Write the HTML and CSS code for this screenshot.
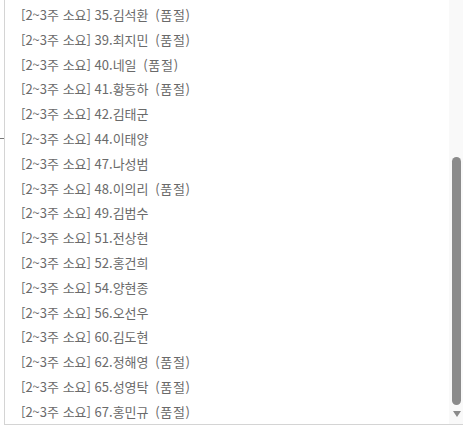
FILE: index.html
```html
<!DOCTYPE html>
<html lang="ko">
<head>
<meta charset="utf-8">
<link rel="stylesheet" href="styles.css">
</head>
<body>
<span class="behind-tick"></span>
<div class="listbox">
  <ul class="options">
    <li>[2~3주 소요] 35.김석환 <span class="soldout">(품절)</span></li>
    <li>[2~3주 소요] 39.최지민 <span class="soldout">(품절)</span></li>
    <li>[2~3주 소요] 40.네일 <span class="soldout">(품절)</span></li>
    <li>[2~3주 소요] 41.황동하 <span class="soldout">(품절)</span></li>
    <li>[2~3주 소요] 42.김태군</li>
    <li>[2~3주 소요] 44.이태양</li>
    <li>[2~3주 소요] 47.나성범</li>
    <li>[2~3주 소요] 48.이의리 <span class="soldout">(품절)</span></li>
    <li>[2~3주 소요] 49.김범수</li>
    <li>[2~3주 소요] 51.전상현</li>
    <li>[2~3주 소요] 52.홍건희</li>
    <li>[2~3주 소요] 54.양현종</li>
    <li>[2~3주 소요] 56.오선우</li>
    <li>[2~3주 소요] 60.김도현</li>
    <li>[2~3주 소요] 62.정해영 <span class="soldout">(품절)</span></li>
    <li>[2~3주 소요] 65.성영탁 <span class="soldout">(품절)</span></li>
    <li>[2~3주 소요] 67.홍민규 <span class="soldout">(품절)</span></li>
  </ul>
  <div class="scrollbar">
    <div class="track"><div class="thumb"></div></div>
    <div class="arrow-down"></div>
  </div>
</div>
</body>
</html>
```
FILE: styles.css
```css
html, body {
  margin: 0;
  padding: 0;
  background: #ffffff;
}
body {
  position: relative;
  width: 463px;
  height: 427px;
  overflow: hidden;
  font-family: "Noto Sans CJK KR", "Noto Sans", sans-serif;
}
.behind-tick {
  position: absolute;
  left: 0;
  top: 138px;
  width: 4px;
  height: 1px;
  background: #777;
}
.listbox {
  margin-left: 4px;
  width: 459px;
  height: 424px;
  border-left: 1px solid #d4d4d4;
  border-bottom: 1px solid #d4d4d4;
  display: flex;
  overflow: hidden;
  box-sizing: content-box;
}
.options {
  flex: 1;
  list-style: none;
  margin: 0;
  padding: 3px 0 0 16px;
}
.options li {
  height: 24.8px;
  line-height: 24.8px;
  font-size: 13px;
  color: #6a6a6a;
  white-space: nowrap;
}
.soldout {
  margin-left: 3px;
  letter-spacing: 0.7px;
}
.scrollbar {
  width: 15px;
  flex: none;
  background: #f9f9f9;
  display: flex;
  flex-direction: column;
  align-items: center;
}
.track {
  flex: 1;
  width: 100%;
  display: flex;
  flex-direction: column;
  justify-content: flex-end;
  align-items: center;
  padding-bottom: 2px;
}
.thumb {
  width: 9px;
  height: 248px;
  background: #8b8b8b;
  border-radius: 5px;
}
.arrow-down {
  width: 0;
  height: 0;
  margin: 4px 0 7px;
  border-left: 4px solid transparent;
  border-right: 4px solid transparent;
  border-top: 6px solid #8b8b8b;
}
```
